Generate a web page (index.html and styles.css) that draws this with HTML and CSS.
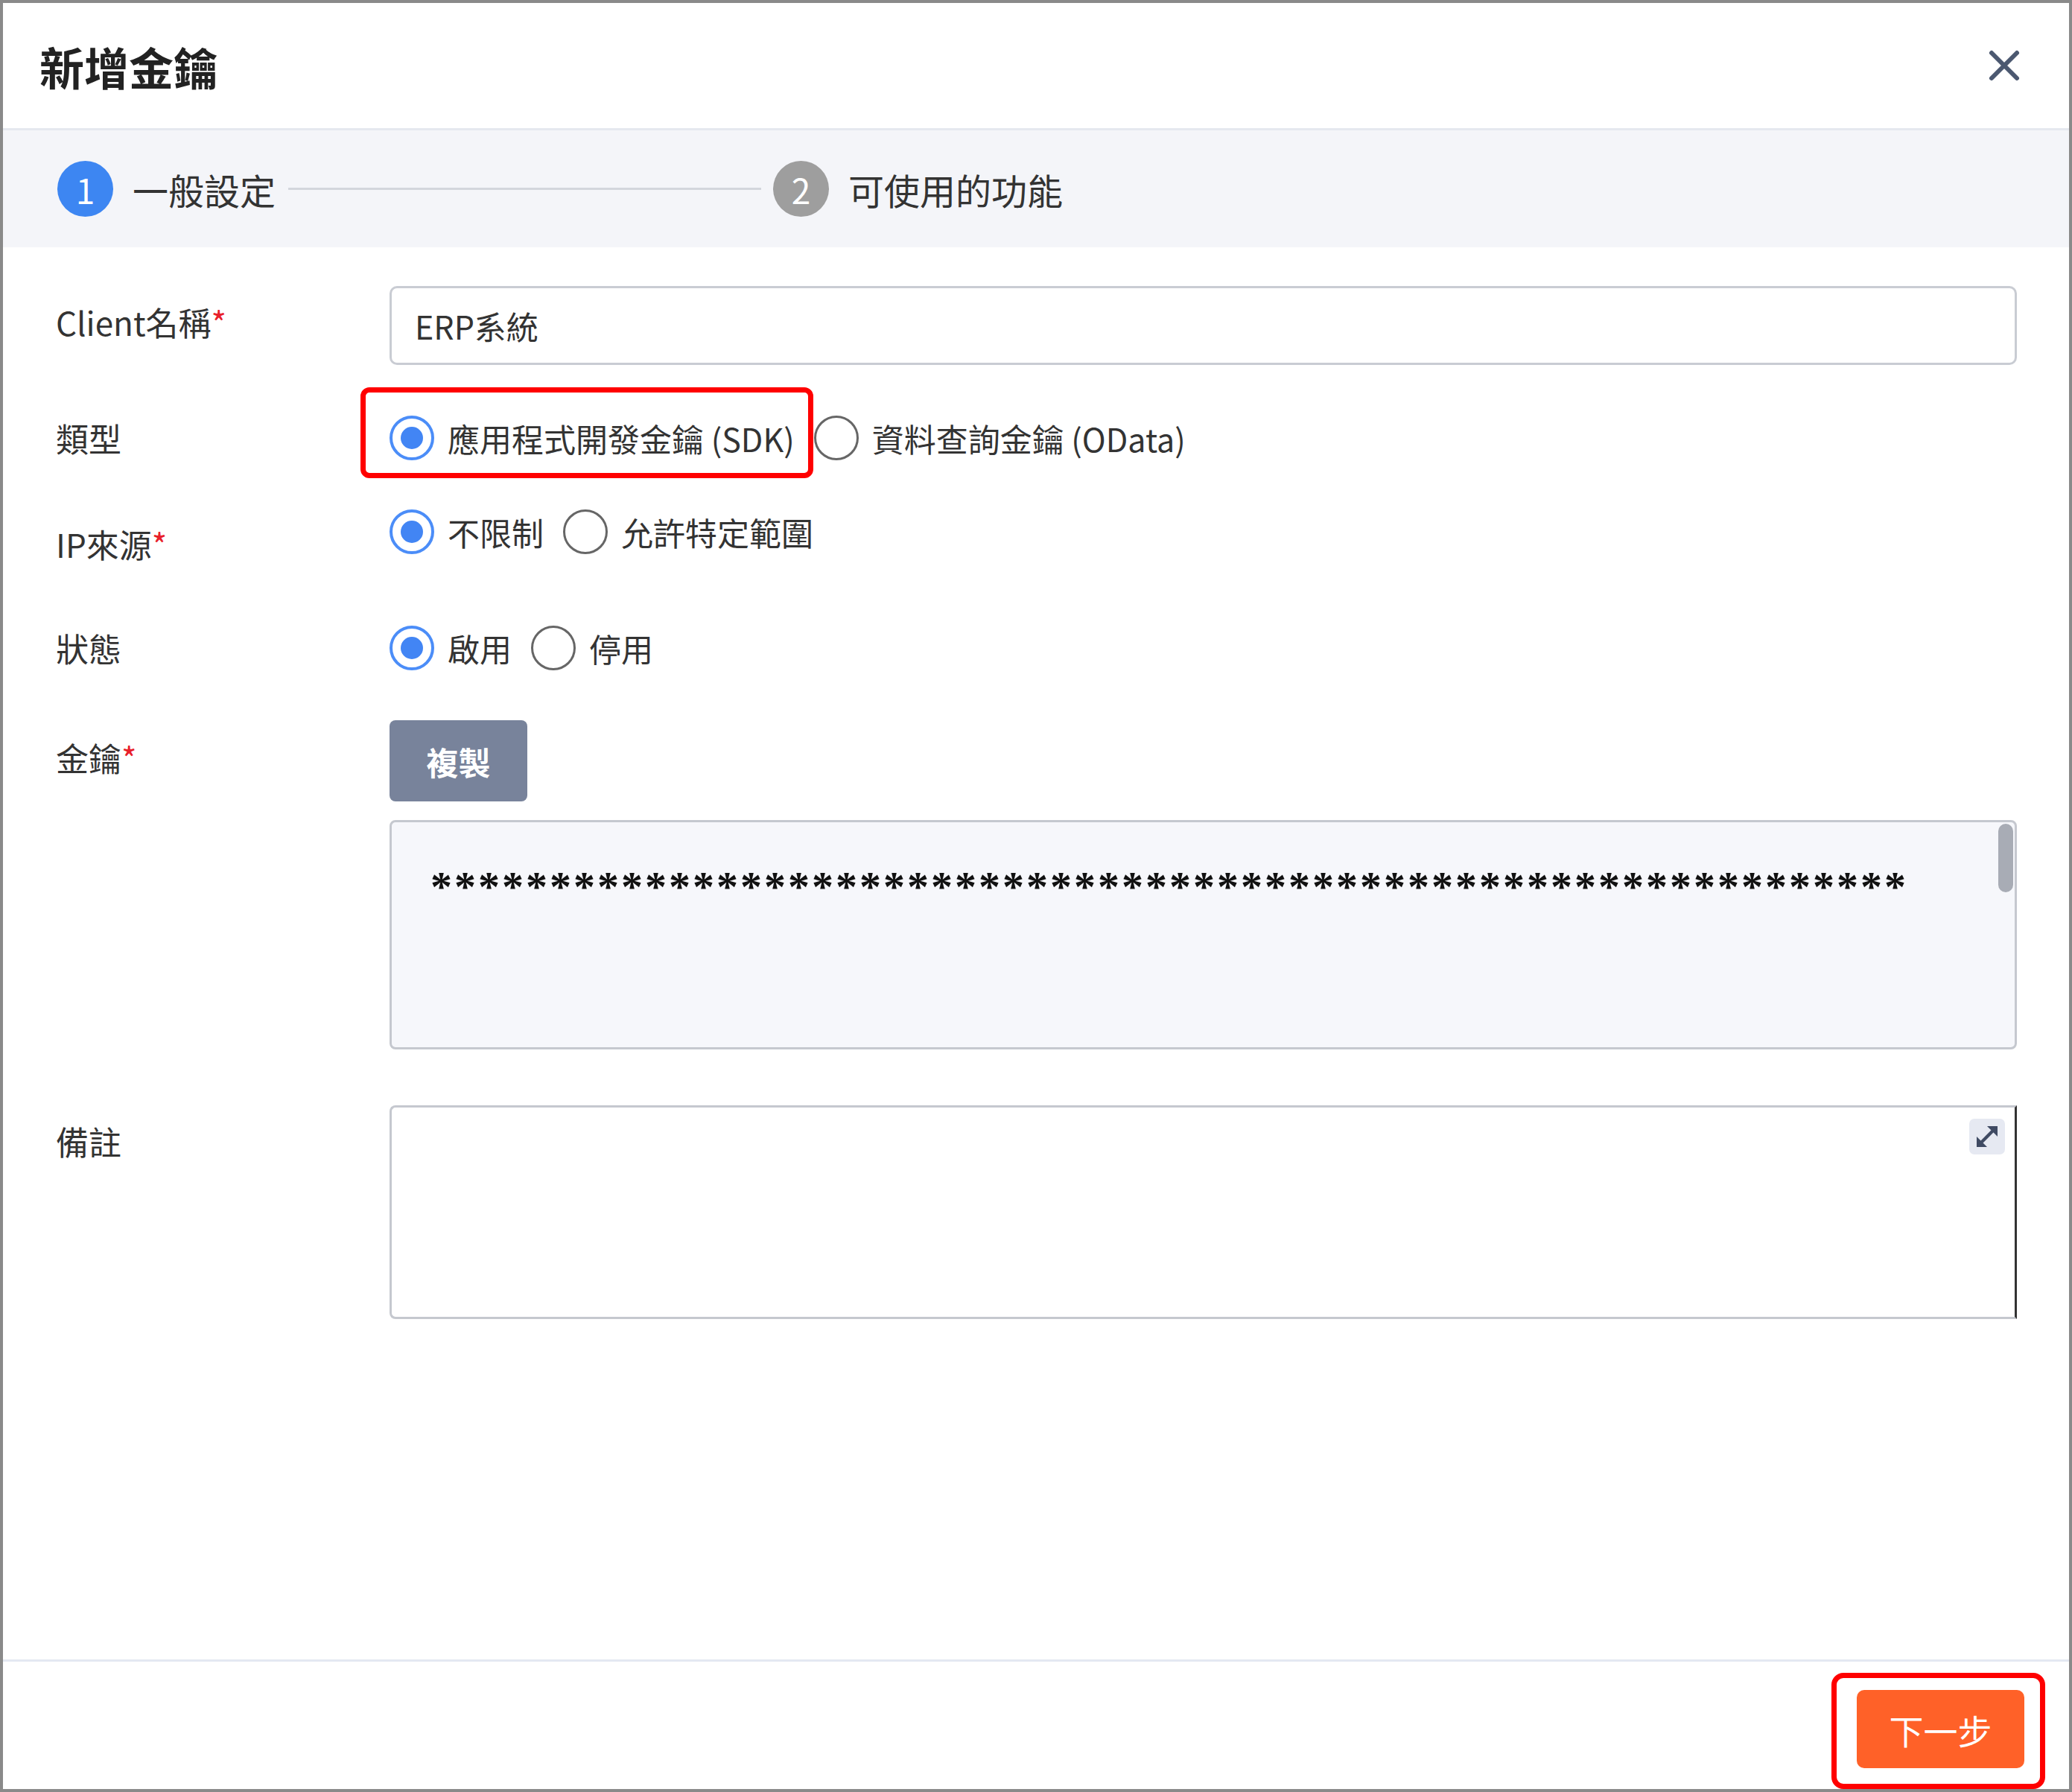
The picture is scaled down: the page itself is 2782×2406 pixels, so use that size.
FILE: index.html
```html
<!DOCTYPE html>
<html lang="zh-Hant">
<head>
    <meta charset="UTF-8">
    <meta name="viewport" content="width=device-width, initial-scale=1.0">
    <title>新增金鑰</title>
    <link rel="stylesheet" href="styles.css">
</head>
<body>

<div class="dialog">
    <div class="dialog-header">
        <h1 class="title">新增金鑰</h1>
        <button class="btn-close" aria-label="關閉">
            <svg width="46" height="46" viewBox="0 0 46 46">
                <path d="M6 6 L40 40 M40 6 L6 40" stroke="#4b5870" stroke-width="6" stroke-linecap="round" fill="none"/>
            </svg>
        </button>
    </div>

    <div class="steps">
        <span class="step-num active">1</span>
        <span class="step-label">一般設定</span>
        <span class="step-line"></span>
        <span class="step-num">2</span>
        <span class="step-label">可使用的功能</span>
    </div>

    <div class="form">
        <div class="row row-name">
            <div class="label">Client名稱<span class="req">*</span></div>
            <div class="text-input">ERP系統</div>
        </div>

        <div class="row row-type">
            <div class="label">類型</div>
            <div class="radio-group">
                <label class="option">
                    <span class="radio checked"></span>
                    <span>應用程式開發金鑰 (SDK)</span>
                    <span class="highlight"></span>
                </label>
                <label class="option">
                    <span class="radio"></span>
                    <span>資料查詢金鑰 (OData)</span>
                </label>
            </div>
        </div>

        <div class="row row-ip">
            <div class="label label-low">IP來源<span class="req">*</span></div>
            <div class="radio-group">
                <label class="option"><span class="radio checked"></span><span>不限制</span></label>
                <label class="option"><span class="radio"></span><span>允許特定範圍</span></label>
            </div>
        </div>

        <div class="row row-status">
            <div class="label">狀態</div>
            <div class="radio-group">
                <label class="option"><span class="radio checked"></span><span>啟用</span></label>
                <label class="option"><span class="radio"></span><span>停用</span></label>
            </div>
        </div>

        <div class="row row-key">
            <div class="label">金鑰<span class="req">*</span></div>
            <div class="key-col">
                <button class="btn-copy">複製</button>
                <div class="key-box">
                    <div class="key-text">**************************************************************</div>
                    <span class="scroll-thumb"></span>
                </div>
            </div>
        </div>

        <div class="row row-note">
            <div class="label">備註</div>
            <div class="note-box">
                <span class="resize-icon">
                    <svg width="40" height="40" viewBox="0 0 30 30">
                        <path d="M7 23 L23 7" stroke="#3f4a63" stroke-width="3.2" stroke-linecap="round"/>
                        <path d="M15 4.5 L25.5 4.5 L25.5 15 Z" fill="#3f4a63"/>
                        <path d="M4.5 15 L4.5 25.5 L15 25.5 Z" fill="#3f4a63"/>
                    </svg>
                </span>
            </div>
        </div>
    </div>

    <div class="dialog-footer">
        <div class="next-wrap">
            <button class="btn-next">下一步</button>
            <span class="highlight highlight-next"></span>
        </div>
    </div>
</div>

</body>
</html>
```

FILE: styles.css
```css
body {
    margin: 0;
    font-family: "Noto Sans CJK TC", "Noto Sans", sans-serif;
    background: #fff;
}

.dialog {
    width: 2782px;
    height: 2406px;
    box-sizing: border-box;
    border: 4px solid #8a8a8a;
    display: flex;
    flex-direction: column;
    background: #fff;
}

.dialog-header {
    height: 171px;
    box-sizing: border-box;
    display: flex;
    align-items: center;
    justify-content: space-between;
    padding: 0 64px 0 49px;
    border-bottom: 3px solid #e5e8ef;
}

.title {
    margin: 0;
    font-size: 60px;
    font-weight: 700;
    color: #222;
}

.btn-close {
    border: none;
    background: none;
    padding: 0;
    display: flex;
}

.steps {
    height: 157px;
    background: #f4f5f9;
    display: flex;
    align-items: center;
    padding-left: 73px;
}

.step-num {
    width: 75px;
    height: 75px;
    border-radius: 50%;
    background: #9e9e9e;
    color: #fff;
    font-size: 46px;
    display: flex;
    align-items: center;
    justify-content: center;
}

.step-num.active { background: #3d86f2; }

.step-label {
    margin-left: 26px;
    font-size: 48px;
    color: #333;
}

.step-line {
    width: 635px;
    height: 3px;
    background: #d3d6dd;
    margin: 0 16px 0 17px;
}

.form {
    flex: 1;
    padding: 52px 70px 0 71px;
}

.row {
    display: grid;
    grid-template-columns: 448px 1fr;
}

.label {
    font-size: 44px;
    line-height: 60px;
    color: #333;
}

.req { color: #e8202a; }

.row-name { align-items: start; }
.row-name .label { padding-top: 18px; }

.text-input {
    height: 106px;
    box-sizing: border-box;
    border: 3px solid #c9ccd3;
    border-radius: 10px;
    padding-left: 31px;
    display: flex;
    align-items: center;
    font-size: 43px;
    color: #333;
}

.row-type,
.row-ip,
.row-status {
    height: 100px;
    align-items: center;
}

.row-type { margin-top: 48px; }
.row-ip { margin-top: 26px; }
.row-status { margin-top: 56px; }

.label-low { padding-top: 32px; }

.radio-group {
    display: flex;
    align-items: center;
    gap: 26px;
}

.option {
    position: relative;
    display: flex;
    align-items: center;
    gap: 18px;
    font-size: 43px;
    color: #333;
}

.radio {
    width: 60px;
    height: 60px;
    box-sizing: border-box;
    border: 3px solid #666;
    border-radius: 50%;
    display: flex;
    align-items: center;
    justify-content: center;
}

.radio.checked { border: 4px solid #4b8df8; }

.radio.checked::after {
    content: "";
    width: 30px;
    height: 30px;
    border-radius: 50%;
    background: #4285f4;
}

.highlight {
    position: absolute;
    left: -39px;
    right: -25px;
    top: -37px;
    bottom: -23px;
    border: 7px solid #ff0000;
    border-radius: 12px;
    pointer-events: none;
}

.row-key {
    margin-top: 47px;
    align-items: start;
}

.row-key .label { padding-top: 20px; }

.key-col {
    display: flex;
    flex-direction: column;
    align-items: flex-start;
    gap: 25px;
}

.btn-copy {
    width: 185px;
    height: 109px;
    border: none;
    border-radius: 8px;
    background: #78839b;
    color: #fff;
    font-family: inherit;
    font-size: 43px;
    font-weight: 700;
}

.key-box {
    position: relative;
    align-self: stretch;
    height: 308px;
    box-sizing: border-box;
    border: 3px solid #c5c8cf;
    border-radius: 8px;
    background: #f6f7fb;
    padding: 52px 0 0 52px;
}

.key-text {
    font-family: "Liberation Serif", serif;
    font-size: 58px;
    font-weight: 700;
    letter-spacing: 3px;
    line-height: 70px;
    color: #111;
}

.scroll-thumb {
    position: absolute;
    right: 2px;
    top: 2px;
    width: 20px;
    height: 92px;
    border-radius: 10px;
    background: #a8acb5;
}

.row-note {
    margin-top: 75px;
    align-items: start;
}

.row-note .label { padding-top: 18px; }

.note-box {
    position: relative;
    height: 287px;
    box-sizing: border-box;
    border: 3px solid #c5c8cf;
    border-right-color: #333;
    border-radius: 8px 0 0 8px;
    background: #fff;
}

.resize-icon {
    position: absolute;
    top: 15px;
    right: 13px;
    width: 48px;
    height: 48px;
    border-radius: 7px;
    background: #e6e9f2;
    display: flex;
    align-items: center;
    justify-content: center;
}

.dialog-footer {
    height: 174px;
    box-sizing: border-box;
    border-top: 3px solid #e4e8f2;
    display: flex;
    justify-content: flex-end;
    align-items: flex-start;
    padding: 38px 60px 0 0;
}

.next-wrap { position: relative; }

.btn-next {
    width: 225px;
    height: 105px;
    border: none;
    border-radius: 10px;
    background: #ff6128;
    color: #fff;
    font-family: inherit;
    font-size: 46px;
    display: block;
}

.highlight-next {
    left: -34px;
    right: -28px;
    top: -23px;
    bottom: -28px;
    border-radius: 16px;
}
```
